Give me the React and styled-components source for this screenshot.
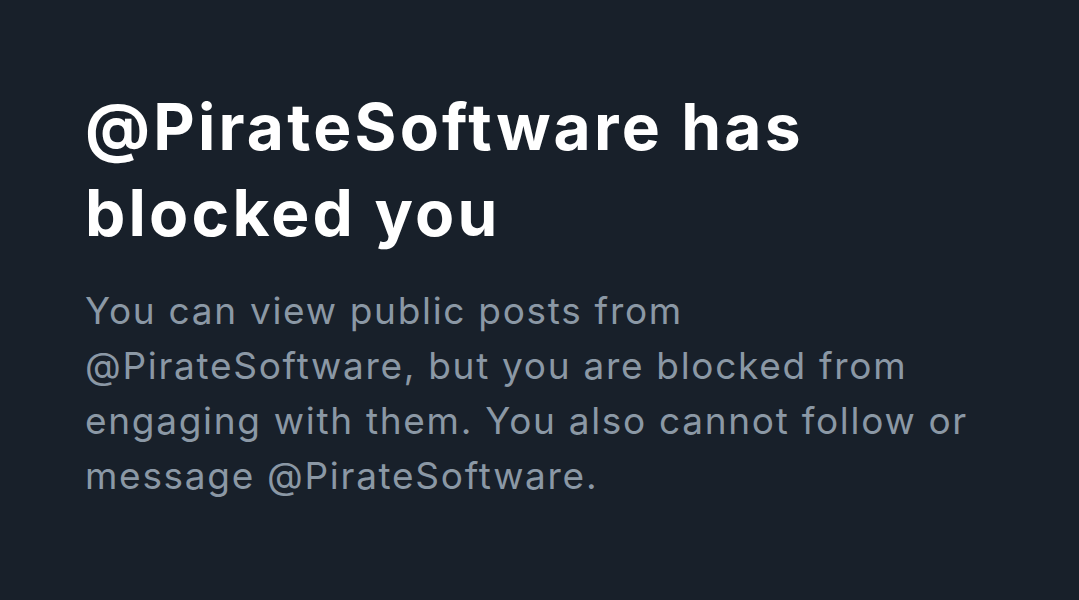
import React from "react";
import styled, { createGlobalStyle } from "styled-components";

const GlobalStyle = createGlobalStyle`
  html, body {
    margin: 0;
    padding: 0;
    background: #18202a;
  }
`;

const Page = styled.div`
  width: 1079px;
  height: 600px;
  box-sizing: border-box;
  padding: 84px 40px 0 85px;
  background: #18202a;
  font-family: Inter, "Noto Sans", sans-serif;
  overflow: hidden;
`;

const Title = styled.h1`
  margin: 0;
  font-size: 64px;
  font-weight: 700;
  line-height: 86px;
  letter-spacing: 3.2px;
  color: #ffffff;
  width: 900px;
`;

const Body = styled.p`
  margin: 27px 0 0;
  font-size: 37px;
  font-weight: 400;
  line-height: 55px;
  letter-spacing: 1.7px;
  color: #8b98a5;
  white-space: nowrap;
`;

export default function App() {
  return (
    <>
      <GlobalStyle />
      <Page>
        <Title>
          @PirateSoftware has
          <br />
          blocked you
        </Title>
        <Body>
          You can view public posts from
          <br />
          @PirateSoftware, but you are blocked from
          <br />
          engaging with them. You also cannot follow or
          <br />
          message @PirateSoftware.
        </Body>
      </Page>
    </>
  );
}
